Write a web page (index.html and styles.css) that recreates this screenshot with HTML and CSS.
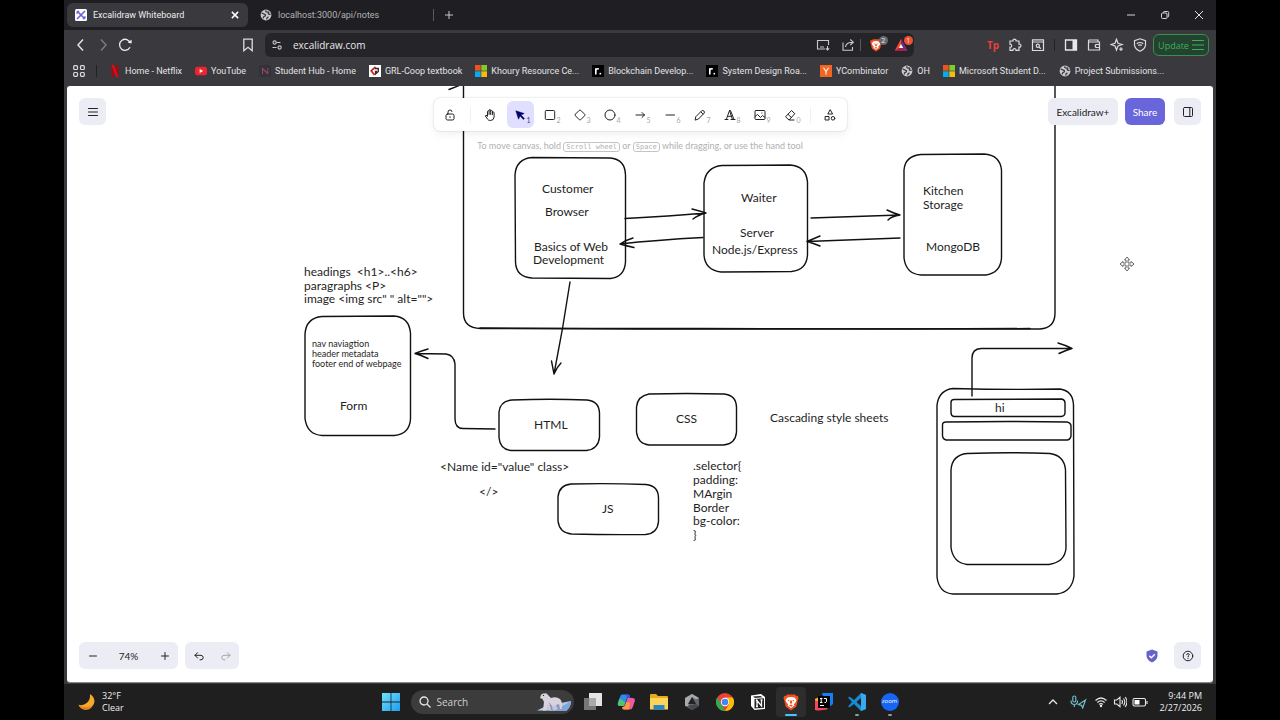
FILE: index.html
```html
<!DOCTYPE html>
<html lang="en">
<head>
<meta charset="utf-8">
<title>Excalidraw Whiteboard</title>
<link rel="stylesheet" href="styles.css">
</head>
<body>
<svg class="defs" aria-hidden="true">
  <symbol id="globe" viewBox="0 0 12 12"><circle cx="6" cy="6" r="5.4" fill="#c9c9cd"/><path d="M1.6 4.2c1.5-.2 1.9 1 3.2 1.2 1.4.2.4 1.8-.6 2-1 .2-.6 1.800-1.400 1.800M6 1.200c-.8 1.600.6 2.200 1.800 1.800 1-.3 1.200.8.6 1.400-.5.600.8 1.200 2.200.8M7 10.600c-.6-1.600.2-2.200 1.600-2.400" fill="none" stroke="#3a393d" stroke-width="1.300"/></symbol>
  <symbol id="ms" viewBox="0 0 12 12"><path fill="#f1511b" d="M0 0h5.700v5.700H0z"/><path fill="#80cc28" d="M6.300 0H12v5.700H6.300z"/><path fill="#00adef" d="M0 6.300h5.700V12H0z"/><path fill="#fbbc09" d="M6.300 6.300H12V12H6.300z"/></symbol>
  <symbol id="road" viewBox="0 0 12 12"><path d="M0 0h12v12H0z"/><path d="M3.800 9.500V3.300M3.800 5.500c.3-1.500 1.500-2 3-1.600" stroke="#fff" stroke-width="1.600" fill="none"/><circle cx="8.300" cy="8.700" r=".9" fill="#fff"/></symbol>
  <symbol id="brave" viewBox="0 0 18 18"><path fill="#f4511f" d="M5 1.500h8l1.200 1.400 1.500-.2.900 2.600-.6 1.200-1.500 6.200c-.3 1-1 1.500-1.800 2.100L9 17.500l-3.700-2.700c-.8-.6-1.500-1.100-1.800-2.100L2 6.500l-.6-1.200.9-2.600 1.500.2z"/><path fill="#fff" d="M5.500 4.600 9 4l3.500.6L14.500 7l-1 2.400-1.700 1.800.6 1.300L9 15l-3.400-2.500.6-1.300-1.700-1.800-1-2.400z"/><path fill="#f4511f" d="m5.300 6.800 2.300.5-.7 1.200zM12.700 6.800l-2.300.5.7 1.200zM8.200 7.500h1.600l.4 2.600L9 11l-1.200-.9zM7 12.500l2-.9 2 .9-2 1.200z"/></symbol>
</svg>

<div class="screen">
  <div class="browser">
    <header class="tabs">
      <div class="tab tab-active">
        <svg class="fav" viewBox="0 0 12 12"><rect width="12" height="12" rx="1.500" fill="#fff"/><path d="M2 2l8 8M10 2 2 10M1.500 4.500 4 2M8 10l2.500-2.500" stroke="#6965db" stroke-width="1.700"/></svg>
        <span>Excalidraw Whiteboard</span>
        <button class="plain tab-close" aria-label="Close tab"><svg viewBox="0 0 8 8"><path d="m1.500 1.500 5 5m0-5-5 5" stroke="#fff" stroke-width="1.200"/></svg></button>
      </div>
      <div class="tab"><svg class="fav"><use href="#globe"/></svg><span>localhost:3000/api/notes</span></div>
      <i class="sep"></i>
      <button class="plain new-tab" aria-label="New tab"><svg viewBox="0 0 10 10"><path d="M5 1v8M1 5h8" stroke="#c8c8cc"/></svg></button>
      <div class="winctl">
        <button class="plain" aria-label="Minimize"><svg viewBox="0 0 10 10"><path d="M1 5h8" stroke="#d5d5d8"/></svg></button>
        <button class="plain" aria-label="Restore"><svg viewBox="0 0 10 10" fill="none" stroke="#d5d5d8"><rect x="1.500" y="3" width="5.500" height="5.500" rx="1"/><path d="M3.500 3V2.300q0-.8.8-.8h3.400q1 0 1 1v3.600q0 .9-1.200.9"/></svg></button>
        <button class="plain" aria-label="Close"><svg viewBox="0 0 10 10"><path d="m1 1 8 8m0-8-8 8" stroke="#e5e5e8"/></svg></button>
      </div>
    </header>

    <div class="navbar">
      <div class="nav">
        <button class="plain" aria-label="Back"><svg viewBox="0 0 14 14"><path d="M9 1.500 4 7l5 5.500" fill="none" stroke="#e8e8ea" stroke-width="1.400"/></svg></button>
        <button class="plain" aria-label="Forward"><svg viewBox="0 0 14 14"><path d="m5 1.500 5 5.500-5 5.500" fill="none" stroke="#7e7d82" stroke-width="1.400"/></svg></button>
        <button class="plain" aria-label="Reload"><svg viewBox="0 0 14 14"><path d="M12 9.300A5.500 5.500 0 1 1 12.300 5" fill="none" stroke="#f0f0f2" stroke-width="1.300"/><path d="M9.600 4.400 13.600 5.400V1.800z" fill="#f0f0f2"/></svg></button>
      </div>
      <button class="plain mark" aria-label="Bookmark"><svg viewBox="0 0 14 14"><path d="M2.800 1.200h8.400v11.500L7 9.300l-4.200 3.400z" fill="none" stroke="#dcdce0" stroke-width="1.300"/></svg></button>
      <div class="address">
        <svg viewBox="0 0 12 12" fill="none" stroke="#c9c9cd" stroke-width="1.100"><circle cx="3.600" cy="3.500" r="1.600"/><path d="M5.500 3.500h4M1.500 8.500h4"/><circle cx="8.600" cy="8.500" r="1.600"/></svg>
        <input class="url" aria-label="Address" value="excalidraw.com">
        <svg class="i14" viewBox="0 0 14 14" fill="none" stroke="#c9c9cd" stroke-width="1.100"><path d="M12.500 7V2.500h-11v8.500h7.500M4 9h4M11.500 8v4M9.800 10.300l1.700 1.700 1.700-1.700"/></svg>
        <svg class="i14" viewBox="0 0 14 14" fill="none" stroke="#c9c9cd" stroke-width="1.100"><path d="M2 4.500v7.700h9.500V9M4.500 9c.3-3 2.500-4.800 7.500-4.800M9.300 1.500 12.300 4.200 9.300 7"/></svg>
        <i class="sep"></i>
        <span class="shield"><svg class="i14"><use href="#brave"/></svg><b>2</b></span>
        <span class="shield"><svg class="i14" viewBox="0 0 14 14"><path d="M7 1 .8 12.500h12.400z" fill="#ff4724"/><path d="M.8 12.500h12.400L7 9z" fill="#9e1f63"/><path d="M7 1v8l6.200 3.500z" fill="#662d91"/><path d="M7 6 4.800 10h4.400z" fill="#fff"/></svg><b class="red">1</b></span>
      </div>
      <div class="ext">
        <b class="tp">Tp</b>
        <button class="plain" aria-label="Extensions"><svg viewBox="0 0 14 14"><path d="M2 3h3c-.6-2.600 3.600-2.600 3 0h3v3.100c2.600-.6 2.600 3.500 0 3v3.200H8c.4-2.200-3.300-2.200-3 0H2V9.200c2.200.4 2.200-3.400 0-3z" fill="none" stroke="#dcdce0" stroke-width="1.200"/></svg></button>
        <button class="plain" aria-label="Search tabs"><svg viewBox="0 0 14 14" fill="none" stroke="#dcdce0" stroke-width="1.200"><path d="M1.500 1.800h11v10.700h-11zM1.500 4h11"/><circle cx="6.800" cy="7.800" r="1.600"/><path d="m8 9 1.800 1.700"/></svg></button>
        <i class="sep"></i>
        <button class="plain" aria-label="Sidebar"><svg viewBox="0 0 14 14"><path d="M1.500 2h11v10h-11z" fill="none" stroke="#e8e8ea" stroke-width="1.300"/><path d="M8.500 2h4v10h-4z" fill="#e8e8ea"/></svg></button>
        <button class="plain" aria-label="Wallet"><svg viewBox="0 0 14 14" fill="none" stroke="#dcdce0" stroke-width="1.200"><path d="M11 4V2H2q-1 .8 0 2h10.500v8h-11V3M12.500 6.500H9q-1.500 1.500 0 3h3.500z"/></svg></button>
        <button class="plain" aria-label="Leo"><svg viewBox="0 0 14 14" fill="none" stroke="#dcdce0" stroke-width="1.200"><path d="M6.500 1.200 8 5.200l4.300 1.300L8 8l-1.500 4L5 8 1 6.500l4-1.300z"/><path d="M11 9.300v3.600M9.200 11.100h3.600"/></svg></button>
        <button class="plain" aria-label="VPN"><svg viewBox="0 0 14 14" fill="none" stroke="#dcdce0" stroke-width="1.200"><path d="m7 .8 5.500 1.900v4.500Q12 11 7 13.300 2 11 1.500 7.200V2.700z"/><path d="M3.800 5.700q3.200-2.400 6.400 0M5.200 7.600q1.800-1.300 3.600 0M7 9.500v.3"/></svg></button>
      </div>
      <button class="update">Update <svg viewBox="0 0 12 12"><path d="M0 1.500h12M0 6h12M0 10.500h12" stroke="#3fae5c" stroke-width="1.200"/></svg></button>
    </div>

    <nav class="bookmarks">
      <button class="plain" aria-label="All bookmarks"><svg class="i12" viewBox="0 0 12 12" fill="none" stroke="#dcdce0" stroke-width="1.200"><rect x=".7" y=".7" width="3.800" height="3.800" rx="1"/><rect x="7.500" y=".7" width="3.800" height="3.800" rx="1"/><rect x=".7" y="7.500" width="3.800" height="3.800" rx="1"/><rect x="7.500" y="7.500" width="3.800" height="3.800" rx="1"/></svg></button>
      <i class="sep"></i>
      <a href="#"><svg viewBox="0 0 12 12"><path d="M2.500 0h2.300v12H2.500zM7.200 0h2.300v12H7.200z" fill="#a80710"/><path d="M2.500 0h2.300l4.700 12H7.200z" fill="#e50914"/></svg>Home - Netflix</a>
      <a href="#"><svg viewBox="0 0 12 12"><rect y="1.700" width="12" height="8.600" rx="2.500" fill="#f0242f"/><path d="m4.700 4 3.500 2-3.500 2z" fill="#fff"/></svg>YouTube</a>
      <a href="#"><svg viewBox="0 0 12 12"><rect width="12" height="12" rx="2" fill="#333238"/><path d="M3.500 9V3.500M8.800 8.500V3" stroke="#5b5f80"/><path d="m2.800 3 6.500 6" stroke="#b4384c" stroke-width="1.400"/></svg>Student Hub - Home</a>
      <a href="#"><svg viewBox="0 0 12 12"><path d="M0 0h12v12H0z" fill="#fff"/><path d="M6.500 2 2.200 5.800 5.500 10" fill="none" stroke="#c32a24" stroke-width="1.700"/><path d="M6 3.500h3.300v3L6.500 9V6.500H8" fill="none" stroke="#3b2525" stroke-width="1.300"/></svg>GRL-Coop textbook</a>
      <a href="#"><svg><use href="#ms"/></svg>Khoury Resource Ce...</a>
      <a href="#"><svg><use href="#road"/></svg>Blockchain Develop...</a>
      <a href="#"><svg><use href="#road"/></svg>System Design Roa...</a>
      <a href="#"><svg viewBox="0 0 12 12"><path d="M0 0h12v12H0z" fill="#f26522"/><path d="M3.500 2.800 6 6.500l2.500-3.700M6 6.500v3" fill="none" stroke="#fff" stroke-width="1.100"/></svg>YCombinator</a>
      <a href="#"><svg><use href="#globe"/></svg>OH</a>
      <a href="#"><svg><use href="#ms"/></svg>Microsoft Student D...</a>
      <a href="#"><svg><use href="#globe"/></svg>Project Submissions...</a>
    </nav>

    <main class="page">
      <svg class="drawing" viewBox="67 86 1146 596" preserveAspectRatio="xMinYMin meet">
        <g class="ink">
          <path d="M463.500 86V313q0 15 17 15.500L700 328.500l340 .5q15-1 15-16V86"/>
          <path d="M480 328Q760 330 1030 328.500"/>
          <path d="M449 89.500 463 84"/>
          <path d="M532 157.500 610 158q15 1 15.500 17V262q-1 15-15 16.500L532 278q-16-1-16.500-16l-.5-87q1-16 17-17.500z"/>
          <path d="M722 165.500 790 165q16 1 17.500 17v73q-1 15-16 16.500L721 272q-16-2-17-17v-72q2-16 18-17.500z"/>
          <path d="M921 154.500 984 154q16 1 17.500 16V258q-1 15-16 17H921q-15-1-17-17V170q1-14 17-15.500z"/>
          <path d="M322 316.500 394 316q15 1 16.500 17v86q-1 15-16 16.500H322q-15-1-17-17V334q1-16 17-17.500z"/>
          <path d="M512 400Q550 398.500 587 400q12 1 12.500 13v24q-1 12-13 13.500H511q-11-1-12-13V412q1-11 13-12z"/>
          <path d="M649 394Q687 393 724 394q12 1 12.500 13v25q-1 12-13 13H649q-11-1-12.500-13V407q1-11 12.500-13z"/>
          <path d="M571 484Q609 483 646 484.500q12 1 12.500 13v24q-1 12-13 13-35 .5-74-.5-12-1-13.500-13V497q1-12 13-13z"/>
          <path d="M953 388.500Q1010 390 1060 389q13 2 13.500 16L1074 576q-2 16-17 18H953q-14-1-16-17V405q2-15 16-16.500z"/>
          <path d="M954 399.500 1062 399q3 1 3 4v10q0 3-4 3.500H954q-3-.5-3-4v-10q0-3 3-3z"/>
          <path d="M946 422Q1010 421 1067 422q4 1 4 4v10q-1 4-4 4H946q-3-.5-3.500-4v-11q0-3 3.500-3z"/>
          <path d="M967 453.500Q1010 452 1050 453.500q14 2 15.500 16L1066 548q-1 14-17 16.500H967q-14-2-16-17V470q1-15 16-16.500z"/>
          <path d="M625 218.500Q670 216 706 213M692 209q8 2 14 4-8 2-13 6"/>
          <path d="M703 237.500Q655 240 620 244M633 238q-7 2-13 6 7 2 14 3.500"/>
          <path d="M811 218 900 215M887 210q6 3 13 5-8 1-12 5"/>
          <path d="M900 238 807 241.500M820 236q-7 3-13 5.500 7 2 13 4.500"/>
          <path d="M570 282Q563 329 554 374M551.500 361l2.500 13q3-7 7-11"/>
          <path d="M495 429 463 428.500q-8 0-8-10V364q-1-9-9-10L415 353.500M428 349q-7 2-13 4.500 7 2 13 5"/>
          <path d="M972 396V358q0-9 9-9.500H1072M1058 343q7 2 14 5.500-7 2-13 5"/>
        </g>
        <g class="note">
          <text x="542" y="193">Customer</text><text x="545" y="216">Browser</text>
          <text x="534" y="251">Basics of Web</text><text x="533" y="264">Development</text>
          <text x="741" y="202">Waiter</text><text x="740" y="237">Server</text><text x="712" y="254">Node.js/Express</text>
          <text x="923" y="195">Kitchen</text><text x="923" y="209">Storage</text><text x="926" y="251">MongoDB</text>
          <text x="304" y="276">headings &#160;&lt;h1&gt;..&lt;h6&gt;</text><text x="304" y="290">paragraphs &lt;P&gt;</text><text x="304" y="303">image &lt;img src" " alt=""&gt;</text>
          <text x="340" y="410">Form</text><text x="534" y="429">HTML</text><text x="676" y="423">CSS</text><text x="602" y="513">JS</text>
          <text x="770" y="422">Cascading style sheets</text>
          <text x="440" y="471">&lt;Name id="value" class&gt;</text><text x="479" y="496">&lt;/&gt;</text>
          <text x="693" y="470">.selector{</text><text x="693" y="484">padding:</text><text x="693" y="498">MArgin</text><text x="693" y="512">Border</text><text x="693" y="525">bg-color:</text><text x="693" y="539">}</text>
          <text x="995" y="412">hi</text>
        </g>
        <g class="note small"><text x="312" y="347">nav naviagtion</text><text x="312" y="357">header metadata</text><text x="312" y="367">footer end of webpage</text></g>
        <g fill="#fff" stroke="#555" stroke-width=".9"><path d="m1127 257 2.500 3h-1.500v3h3v-1.500l3 2.500-3 2.500V265h-3v3h1.500l-2.500 3-2.500-3h1.500v-3h-3v1.500l-3-2.500 3-2.500v1.500h3v-3h-1.500z"/></g>
      </svg>

      <div class="ui">
        <div class="topbar">
          <button class="soft" aria-label="Menu"><svg viewBox="0 0 14 14"><path d="M2.500 3.500h9M2.500 7h9M2.500 10.500h9" class="ln"/></svg></button>
          <div class="center">
            <div class="tools">
              <button aria-label="Lock"><svg viewBox="0 0 14 14" class="ln"><rect x="3" y="6" width="8" height="6" rx="1.500"/><path d="M5 6V4q0-2 2-2t2 1.500M7 8.700v.8"/></svg></button>
              <i class="div"></i>
              <button aria-label="Hand"><svg viewBox="0 0 14 14" class="ln"><path d="M4.500 8V3.300q.8-1.200 1.600 0V6.500M6.100 3V2q.8-1.200 1.600 0v4.500M7.700 3q.9-1.200 1.700 0v3.700M9.400 4.500q.9-1.200 1.700 0V9q-.3 3.500-3.700 3.500-2 0-3-1.500L2.300 7.800q.3-1.400 2.200.2"/></svg></button>
              <button class="on" aria-label="Selection"><svg viewBox="0 0 14 14"><path d="m2.800 2.800 2.700 8.400 1.600-3.200 3.300 3.500 1.100-1.100L8 7.100l3.200-1.600z" fill="#030064" stroke="#030064" stroke-width=".5" stroke-linejoin="round"/></svg><sub>1</sub></button>
              <button aria-label="Rectangle"><svg viewBox="0 0 14 14" class="ln"><rect x="2.300" y="2.500" width="9.400" height="9" rx="1"/></svg><sub>2</sub></button>
              <button aria-label="Diamond"><svg viewBox="0 0 14 14" class="ln"><path d="M6.300 2.300q.7-.6 1.400 0l4 4q.6.700 0 1.400l-4 4q-.7.600-1.400 0l-4-4q-.6-.7 0-1.400z"/></svg><sub>3</sub></button>
              <button aria-label="Ellipse"><svg viewBox="0 0 14 14" class="ln"><circle cx="7" cy="7" r="5"/></svg><sub>4</sub></button>
              <button aria-label="Arrow"><svg viewBox="0 0 14 14" class="ln"><path d="M3 7h8.500M9 4.500 11.500 7 9 9.500"/></svg><sub>5</sub></button>
              <button aria-label="Line"><svg viewBox="0 0 14 14" class="ln"><path d="M3 7h8.500"/></svg><sub>6</sub></button>
              <button aria-label="Draw"><svg viewBox="0 0 14 14" class="ln"><path d="m3 8.500 5.700-5.700q1.200-.8 2.200.2t.2 2.200L5.500 11 2.500 12zM8 4l2 2"/></svg><sub>7</sub></button>
              <button aria-label="Text"><svg viewBox="0 0 14 14" class="ln"><path d="M2 11.500h3M8 11.500h4M3.300 11.500 6.500 2.500h1l3.500 9M6.500 2.500 9.500 11.500M4.700 8.300h4"/></svg><sub>8</sub></button>
              <button aria-label="Image"><svg viewBox="0 0 14 14" class="ln"><rect x="2" y="2.500" width="10" height="9" rx="1"/><path d="m2 8.500 2.500-2 3 3 2-2 2.500 2M8.800 5h.2"/></svg><sub>9</sub></button>
              <button aria-label="Eraser"><svg viewBox="0 0 14 14" class="ln"><path d="M11 12H6L2.500 8.800 8.500 2.500l3.300 3.200-5.500 6M5 6.200l3.500 3.500"/></svg><sub>0</sub></button>
              <i class="div"></i>
              <button aria-label="More tools"><svg viewBox="0 0 14 14" class="ln"><path d="M7 2 4.800 6h4.400zM2.500 8.500H6V12H2.500z"/><circle cx="10" cy="10.300" r="1.800"/></svg></button>
            </div>
            <p class="hint">To move canvas, hold <kbd>Scroll wheel</kbd> or <kbd>Space</kbd> while dragging, or use the hand tool</p>
          </div>
          <div class="right">
            <a class="soft plus" href="#">Excalidraw+</a>
            <button class="share">Share</button>
            <button class="soft library" aria-label="Library"><svg viewBox="0 0 14 14" class="ln"><rect x="2.500" y="2.500" width="9" height="9" rx="1"/><path d="M8.800 2.500v9"/></svg></button>
          </div>
        </div>
        <div class="bottombar">
          <div class="group zoom">
            <button aria-label="Zoom out"><svg viewBox="0 0 14 14" class="ln"><path d="M3.500 7h7"/></svg></button>
            <span>74%</span>
            <button aria-label="Zoom in"><svg viewBox="0 0 14 14" class="ln"><path d="M3.500 7h7M7 3.500v7"/></svg></button>
          </div>
          <div class="group undo">
            <button aria-label="Undo"><svg viewBox="0 0 14 14" class="ln"><path d="M5.500 9 3 6.300l2.500-2.600M3 6.300h6q2.200.3 2.200 2.300T9 10.800H8"/></svg></button>
            <button aria-label="Redo" disabled><svg viewBox="0 0 14 14" class="ln"><path d="M8.500 9 11 6.300 8.500 3.700M11 6.300H5Q2.800 6.600 2.800 8.600T5 10.800h1"/></svg></button>
          </div>
          <svg class="i14 safe" viewBox="0 0 14 14"><path d="m7 .5 5.500 2v4.500Q12 11 7 13.500 2 11 1.500 7V2.500z" fill="#6761c8"/><path d="m4.300 6.800 2 2 3.500-3.500" fill="none" stroke="#fff" stroke-width="1.300"/></svg>
          <button class="soft" aria-label="Help"><svg viewBox="0 0 14 14" class="ln"><circle cx="7" cy="7" r="4.800"/><path d="M5.700 5.700q.3-1.300 1.500-1.100 1.300.3 1 1.500Q7 6.700 7 7.800M7 9.500v.2"/></svg></button>
        </div>
      </div>
    </main>
  </div>

  <footer class="taskbar">
    <div class="weather">
      <svg viewBox="0 0 18 18"><path d="M12 1q6 4 4 9.500-2.500 6.500-9 6.300-4.500-.5-6.500-5 5 1.200 8.500-2T12 1z" fill="#f5a92b"/><path d="M1 12.500q2.500 4 7 3.800 5-.4 7.500-5-3 3-7.500 3-4 0-7-1.800z" fill="#e77c22"/></svg>
      <span>32°F<br>Clear</span>
    </div>
    <div class="apps">
      <svg class="win" viewBox="0 0 18 18"><defs><linearGradient id="w" x2="1" y2="1"><stop stop-color="#6fe0fd"/><stop offset="1" stop-color="#1e9df0"/></linearGradient></defs><path d="M0 0h8.600v8.600H0zM9.400 0H18v8.600H9.400zM0 9.400h8.600V18H0zM9.400 9.400H18V18H9.400z" fill="url(#w)"/></svg>
      <label class="search"><svg viewBox="0 0 12 12" fill="none" stroke="#e8e8e8" stroke-width="1.300"><circle cx="5" cy="5" r="4"/><path d="m8 8 3.500 3.500"/></svg><input type="text" placeholder="Search" aria-label="Search">
        <svg class="bear" viewBox="0 0 36 20"><path d="M1 18.500 10 14l25-5q0 6-5 10z" fill="#b5c9e8"/><path d="m18 19 17-10q0 6-5 10z" fill="#7ea6d8"/><path d="M5 3q1-2 3-1.500Q11 .5 12 3l3 3q5-2 9 1 3 3 1.500 10H22l-1-4-5 1 1 4.500h-3L12 13l-2 5.500H7L8 10 6.500 7 4 6z" fill="#d8d2df"/><path d="m13 10 2 8.500h2L16 14zM20 13l2 4h2l-1-5z" fill="#9991aa"/><circle cx="7.500" cy="3.500" r=".6"/></svg></label>
      <svg viewBox="0 0 18 18"><path d="M5 0h13v13H5z" fill="#e4e4e4"/><path d="M0 5h12v12H0z" fill="#777"/><path d="M5 5h7v8H5z" fill="#aaa"/></svg>
      <svg viewBox="0 0 18 18"><path d="M5 1.500h6q1.500 0 2 2L10 5 7.500 13H3Q0 13 .8 10L3 4q.5-2.500 2-2.500z" fill="#2c8bed"/><path d="M2.500 5.500 1 10q-.6 3 2 3h4l1-4z" fill="#54c46b"/><path d="M13 5h2.500q3 0 2.300 3l-2 6q-.8 2.500-3 2.500H7q-1.500 0-2-2l3-1.500L10.500 5z" fill="#ee5b9c"/><path d="m5 14.500 3-1.500 1.200-4 4 1-1.400 6.500H7q-1.500 0-2-2z" fill="#ff9a3c"/><path d="m9 1.500 2 0q1.500 0 2 2l.5 1.500H10z" fill="#3556d8"/></svg>
      <svg viewBox="0 0 18 18"><path d="M0 2q0-1 1-1h5l2 2h9q1 0 1 1v12H0z" fill="#e9a91d"/><path d="M0 5h18v11.500H0z" fill="#fcd45a"/><path d="M3.500 12h11v4.500h-11z" fill="#2787c8"/></svg>
      <svg viewBox="0 0 18 18"><path d="m9 1 7 4v8l-7 4-7-4V5z" fill="#62666b"/><path d="m9 1 7 4-3 1.500L9 4 5 13l-3 0V5z" fill="#a6aaae"/><path d="m9 4 4 7H5z" fill="#222"/><path d="m5 13 8-2 3 2-7 4z" fill="#44484c"/></svg>
      <svg viewBox="0 0 18 18"><circle cx="9" cy="9" r="9" fill="#ea4335"/><path d="M1.200 4.500 6 12l3 6A9 9 0 0 1 1.200 4.500z" fill="#34a853"/><path d="M9 18a9 9 0 0 0 7.800-13.500H9L13 11z" fill="#fbbc05"/><circle cx="9" cy="9" r="4.200" fill="#fff"/><circle cx="9" cy="9" r="3.300" fill="#4285f4"/></svg>
      <svg viewBox="0 0 18 18"><path d="M2 2.500 12 1l4 3v12L5.500 17 2 13z" fill="#fff"/><path d="M4 3.500 11.500 3l2 1.200L6 5zM5.500 6 15 5.300v9.500l-9.500.7z" fill="#222"/><path d="M8 13.500V7.500l4.500 5.500V7M6.800 7.500h2M11.500 7h2M7 13.500h2" stroke="#fff" stroke-width="1.300" fill="none"/></svg>
      <span class="current"><svg><use href="#brave"/></svg></span>
      <svg viewBox="0 0 18 18"><path d="M0 6 4 4v12l-4 1z" fill="#fdb12c"/><path d="M7 0h11v11l-6 5z" fill="#157efb"/><path d="M0 7v8q0 3 4 2.500l8-1V12z" fill="#f34760"/><path d="M3 3h12v12H3z"/><path d="M5 5.500h2.500M6.200 5.500v4M5 9.500h2.500M9 5.500h2.500v3q0 1.200-2 1M5 12.500h4" stroke="#fff" fill="none"/></svg>
      <span class="running"><svg viewBox="0 0 18 18"><path d="m13 0 5 2v14l-5 2-7-7-4.300 3.300L0 13.500 4 9 0 4.500l1.700-.8L6 7zM13 5 8.500 9l4.500 4z" fill="#168bd2" fill-rule="evenodd"/><path d="m13 0 5 2v14l-5 2z" fill="#38a9ee"/></svg></span>
      <span class="running zoomapp"><i>zoom</i></span>
    </div>
    <div class="tray">
      <svg viewBox="0 0 14 14" fill="none" stroke="#e8e8e8" stroke-width="1.300"><path d="m3 9 4-4 4 4"/></svg>
      <svg class="mic" viewBox="0 0 18 14" fill="none" stroke="#72b9c9" stroke-width="1.200"><rect x="3.800" y="1" width="3" height="6" rx="1.500"/><path d="M2 5.500q0 4 3.300 4t3.300-4M5.300 9.500V12M16.500 5 9.500 9.500l3 .8 1.200 2.700z"/></svg>
      <svg viewBox="0 0 14 14" fill="none" stroke="#e8e8e8" stroke-width="1.200"><path d="M1.500 5.500q5.500-5 11 0M3.300 7.500q3.700-3.300 7.400 0M5 9.400q2-1.600 4 0"/><circle cx="7" cy="11" r=".6" fill="#fff"/></svg>
      <svg viewBox="0 0 14 14" fill="none" stroke="#e8e8e8" stroke-width="1.100"><path d="M1.500 5h2.300L7 2.300v9.400L3.800 9H1.500zM8.800 5q1.300 2 0 4M10.500 3.500q2.600 3.500 0 7M12.200 2q3.500 5 0 10"/></svg>
      <svg class="bat" viewBox="0 0 16 14"><rect x="1" y="3.500" width="12.500" height="7.500" rx="1.500" fill="none" stroke="#e8e8e8" stroke-width="1.100"/><path d="M2.500 5h5v4.500h-5zM14.500 6h1v3h-1z" fill="#fff"/></svg>
      <span class="clock">9:44 PM<br>2/27/2026</span>
    </div>
  </footer>
</div>
</body>
</html>
```
FILE: styles.css
```css
* { box-sizing: border-box; }
body { margin: 0; background: #000; font-family: "Open Sans", "Noto Sans", sans-serif; }
button, input { font: inherit; color: inherit; border: 0; padding: 0; background: none; }
button { display: flex; align-items: center; justify-content: center; }
svg { display: block; flex: none; }
a { color: inherit; text-decoration: none; }
.defs { position: absolute; width: 0; height: 0; }

.screen { display: flex; flex-direction: column; height: 100vh; min-height: 480px; margin: 0 64px; background: #1f1f1f; }
.browser { flex: 1; min-height: 0; display: flex; flex-direction: column; background: #3a393e; }
.sep { flex: none; width: 1px; height: 12px; background: #5a595e; }
.plain svg, .i14 { width: 14px; height: 14px; }
.i12, .plain .i12 { width: 12px; height: 12px; }

.tabs { display: flex; align-items: center; height: 30px; padding: 0 8px 0 3px; background: #1f1e23; color: #b3b3b8; font-family: Roboto, "Open Sans", sans-serif; font-size: 9px; }
.tab { display: flex; align-items: center; gap: 6px; width: 181px; height: 24px; padding: 0 8px; margin-right: 4px; border-radius: 6px; }
.tab + .tab { margin: 0; }
.tab-active { color: #eee; background: #3a393e; }
.tab .fav { width: 12px; height: 12px; }
.tab .tab-close { margin-left: auto; }
.tab .tab-close svg { width: 10px; height: 10px; }
.new-tab { margin-left: 10px; }
.tabs .new-tab svg, .winctl .plain svg { width: 10px; height: 10px; }
.winctl { display: flex; gap: 24px; margin-left: auto; padding-right: 4px; }

.navbar { display: flex; align-items: center; height: 30px; padding: 0 7px 0 10px; color: #e8e8ea; }
.nav { display: flex; gap: 8px; width: 167px; }
.address { flex: 1; display: flex; align-items: center; height: 24px; margin-left: 10px; padding: 0 6px; border-radius: 6px; background: #252429; }
.address > svg { width: 12px; height: 12px; }
.address > .i14 { width: 14px; height: 14px; margin-right: 11px; }
.address > .sep { margin-right: 8px; margin-left: -6px; }
.url { flex: 1; min-width: 0; margin-left: 10px; font-size: 10px; }
.shield { position: relative; margin-right: 11px; }
.shield:last-child { margin-right: 0; }
.shield b { position: absolute; right: -5px; top: -2px; width: 9px; height: 9px; border-radius: 5px; background: #68696f; font-size: 7px; line-height: 9px; font-weight: 400; text-align: center; }
.shield .red { background: #f0502f; }
.ext { display: flex; align-items: center; gap: 9px; margin: 0 6px 0 73px; }
.ext .sep { background: #222126; }
.tp { color: #ee3f3c; font-size: 10px; }
.update { gap: 3px; width: 56px; height: 22px; border: 1px solid #3b8f50; border-radius: 6px; background: #23422f; color: #3fae5c; font-size: 9px; }
.update svg { width: 12px; height: 12px; }

.bookmarks { display: flex; align-items: center; gap: 13px; height: 26px; padding: 0 9px 4px; overflow: hidden; color: #e3e3e6; font-family: Roboto, "Open Sans", sans-serif; font-size: 9px; white-space: nowrap; }
.bookmarks .sep { margin: 0 -1px 0 -2px; background: #222126; }
.bookmarks a { display: flex; align-items: center; gap: 4px; }
.bookmarks a svg { width: 12px; height: 12px; }

.page { position: relative; flex: 1; min-height: 0; margin: 0 3px 2px; border-radius: 3px; overflow: hidden; background: #fff; box-shadow: 0 1px 0 #888; }
.drawing { width: 100%; height: 100%; }
.ink { fill: none; stroke: #111; stroke-width: 1.4; stroke-linecap: round; stroke-linejoin: round; }
.note { font-family: Excalifont, Lato, sans-serif; font-size: 12px; fill: #1e1e1e; white-space: pre; }
.small { font-size: 9px; }

.ui { position: absolute; inset: 0; display: flex; flex-direction: column; justify-content: space-between; padding: 12px 12px 13px; color: #1b1b1f; font-family: Lato, "Open Sans", sans-serif; font-size: 10px; }
.topbar { display: grid; grid-template-columns: 1fr auto 1fr; align-items: start; }
.ln { fill: none; stroke: #222226; stroke-width: 1; stroke-linecap: round; stroke-linejoin: round; }
.ui svg { width: 14px; height: 14px; }
.soft { display: flex; align-items: center; justify-content: center; width: 27px; height: 27px; border-radius: 6px; background: #ececf4; }
.tools { display: flex; align-items: center; gap: 3px; height: 33px; padding: 0 3px; border-radius: 6px; background: #fff; box-shadow: 0 0 2px #0003, 0 4px 8px #0000000d; }
.tools button { position: relative; width: 27px; height: 27px; border-radius: 6px; }
.tools .on { background: #e0dfff; }
.tools sub { position: absolute; right: 3px; bottom: 4px; font-size: 7px; line-height: 8px; color: #a5a5a9; }
.tools .on sub { color: #3c3880; }
.div { width: 1px; height: 16px; margin: 0 3px; background: #f0f0f2; }
.hint { margin: 8px 0 0; text-align: center; font-size: 9px; line-height: 14px; color: #b0b0b0; white-space: nowrap; }
kbd { padding: 0 2px; border: 1px solid #c4c4c4; border-radius: 3px; font-family: "DejaVu Sans Mono", monospace; font-size: 7px; }
.right { display: flex; justify-content: flex-end; gap: 7px; }
.plus { width: 70px; }
.share { width: 40px; height: 27px; border-radius: 6px; background: #6965db; color: #fff; }
.library { margin-left: 2px; }
.bottombar { display: flex; align-items: center; }
.group { display: flex; align-items: center; justify-content: space-between; height: 27px; border-radius: 6px; background: #ececf4; }
.group button { width: 27px; height: 27px; }
.zoom { width: 99px; margin-right: 7px; }
.undo { width: 54px; }
.undo button:disabled { opacity: .35; }
.safe { margin: 0 15px 0 auto; }

.taskbar { display: grid; grid-template-columns: 1fr auto 1fr; align-items: center; height: 36px; padding: 0 14px; color: #eee; font-size: 9px; line-height: 12px; }
.weather { display: flex; align-items: center; gap: 6px; }
.weather svg { width: 18px; height: 18px; }
.apps { display: flex; align-items: center; gap: 15px; }
.apps > svg, .running svg, .current svg { width: 18px; height: 18px; }
.apps .win { margin-right: -4px; }
.search { display: flex; align-items: center; gap: 6px; width: 163px; height: 24px; padding: 0 2px 0 8px; margin-right: -5px; border-radius: 12px; background: #3c3c3c; font-size: 10px; }
.search svg { width: 12px; height: 12px; }
.search .bear { width: 36px; height: 20px; }
.search input { flex: 1; min-width: 0; }
.search input::placeholder { color: #d0d0d0; opacity: 1; }
.current, .running { position: relative; width: 18px; height: 18px; }
.current::before { content: ""; position: absolute; inset: -6px; border-radius: 4px; background: #2d2d2d; }
.current svg { position: relative; }
.current::after, .running::after { content: ""; position: absolute; left: 7px; bottom: -5px; width: 4px; height: 2px; border-radius: 1px; background: #999; }
.current::after { left: 3px; width: 12px; background: #4cc2ff; }
.zoomapp { border-radius: 9px; background: #1665f5; font-size: 6px; line-height: 17px; text-align: center; color: #fff; }
.zoomapp i { font-style: normal; }
.tray { display: flex; align-items: center; justify-content: flex-end; gap: 5px; }
.tray svg { width: 14px; height: 14px; }
.tray .mic { width: 18px; margin: 0 2px 0 4px; }
.tray .bat { width: 16px; }
.clock { margin-left: 6px; text-align: right; }
```
